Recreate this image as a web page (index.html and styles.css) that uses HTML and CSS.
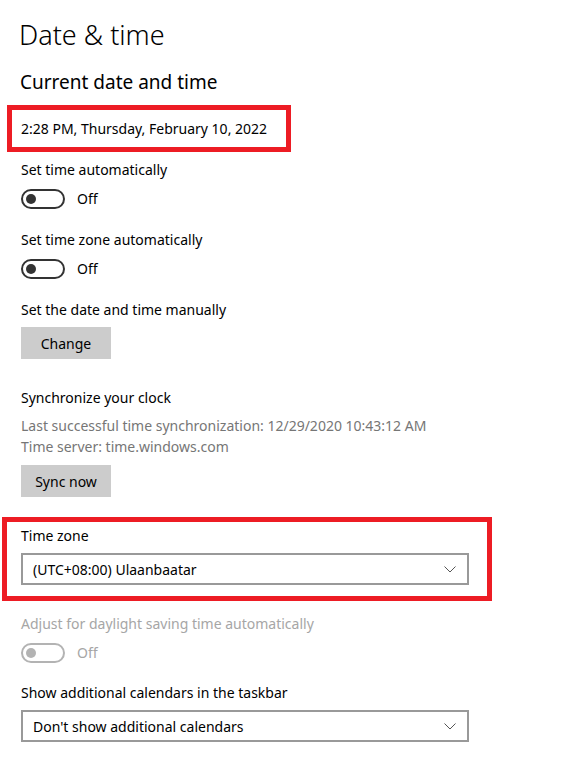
FILE: index.html
```html
<!DOCTYPE html>
<html lang="en">
<head>
<meta charset="utf-8">
<title>Date &amp; time</title>
<link rel="stylesheet" href="styles.css">
</head>
<body>
<main class="page">
  <h1 class="title">Date &amp; time</h1>
  <h2 class="subtitle">Current date and time</h2>

  <div class="mark mark-date">2:28 PM, Thursday, February 10, 2022</div>

  <div class="label gap-8">Set time automatically</div>
  <div class="switch-row gap-9">
    <span class="switch"><span class="knob"></span></span>
    <span class="switch-text">Off</span>
  </div>

  <div class="label gap-21">Set time zone automatically</div>
  <div class="switch-row gap-9">
    <span class="switch"><span class="knob"></span></span>
    <span class="switch-text">Off</span>
  </div>

  <div class="label gap-21">Set the date and time manually</div>
  <button class="btn gap-7" type="button">Change</button>

  <div class="label gap-29">Synchronize your clock</div>
  <p class="info gap-7">Last successful time synchronization: 12/29/2020 10:43:12 AM<br>Time server: time.windows.com</p>
  <button class="btn gap-8" type="button">Sync now</button>

  <div class="mark mark-zone">
    <div class="label">Time zone</div>
    <div class="select gap-7">
      <span>(UTC+08:00) Ulaanbaatar</span>
      <svg class="chev" width="12" height="7" viewBox="0 0 12 7"><path d="M0.5 0.5 L6 6 L11.5 0.5" fill="none" stroke="#555" stroke-width="1"/></svg>
    </div>
  </div>

  <div class="label disabled gap-13">Adjust for daylight saving time automatically</div>
  <div class="switch-row gap-9 disabled">
    <span class="switch"><span class="knob"></span></span>
    <span class="switch-text">Off</span>
  </div>

  <div class="label gap-20">Show additional calendars in the taskbar</div>
  <div class="select gap-7">
    <span>Don't show additional calendars</span>
    <svg class="chev" width="12" height="7" viewBox="0 0 12 7"><path d="M0.5 0.5 L6 6 L11.5 0.5" fill="none" stroke="#555" stroke-width="1"/></svg>
  </div>
</main>
</body>
</html>
```
FILE: styles.css
```css
html, body {
  margin: 0;
  padding: 0;
  background: #fff;
}

body {
  font-family: "Noto Sans", "Open Sans", sans-serif;
  font-size: 14px;
  color: #000;
}

.page {
  display: flex;
  flex-direction: column;
  align-items: flex-start;
  padding: 0 0 20px 21px;
}

.title {
  margin: 0;
  padding-top: 15px;
  font-size: 27px;
  font-weight: 300;
  line-height: 40px;
  margin-left: -2px;
}

.subtitle {
  margin: 13px 0 0 -1px;
  font-size: 19px;
  font-weight: 400;
  line-height: 28px;
}

.gap-7 { margin-top: 7px; }
.gap-8 { margin-top: 8px; }
.gap-9 { margin-top: 9px; }
.gap-13 { margin-top: 13px; }
.gap-20 { margin-top: 20px; }
.gap-21 { margin-top: 21px; }
.gap-29 { margin-top: 29px; }

.label {
  line-height: 20px;
}

.disabled {
  color: #a6a6a6;
}

/* red highlight frames around the date and the time zone picker */
.mark {
  border: 5px solid #ed1c24;
  box-sizing: border-box;
}

.mark-date {
  margin: 9px 0 0 -14px;
  width: 284px;
  height: 47px;
  padding-left: 9px;
  display: flex;
  align-items: center;
}

.mark-zone {
  margin: 20px 0 0 -19px;
  width: 490px;
  height: 84px;
  padding: 4px 0 0 14px;
  display: flex;
  flex-direction: column;
}

/* toggle switch */
.switch-row {
  display: flex;
  align-items: center;
  gap: 12px;
  height: 20px;
}

.switch {
  width: 44px;
  height: 20px;
  box-sizing: border-box;
  border: 2px solid #333;
  border-radius: 10px;
  display: flex;
  align-items: center;
  padding-left: 3px;
}

.knob {
  width: 10px;
  height: 10px;
  border-radius: 50%;
  background: #333;
}

.disabled .switch {
  border-color: #b3b3b3;
}

.disabled .knob {
  background: #b3b3b3;
}

.switch-text {
  line-height: 20px;
}

/* buttons */
.btn {
  font: inherit;
  color: #000;
  background: #ccc;
  border: 0;
  height: 32px;
  width: 90px;
  padding: 0;
}

.info {
  margin-bottom: 0;
  color: #767676;
  line-height: 21px;
}

/* drop-down boxes */
.select {
  width: 448px;
  height: 32px;
  box-sizing: border-box;
  border: 2px solid #999;
  display: flex;
  align-items: center;
  justify-content: space-between;
  padding: 0 11px 0 10px;
}

.chev {
  display: block;
}
```
